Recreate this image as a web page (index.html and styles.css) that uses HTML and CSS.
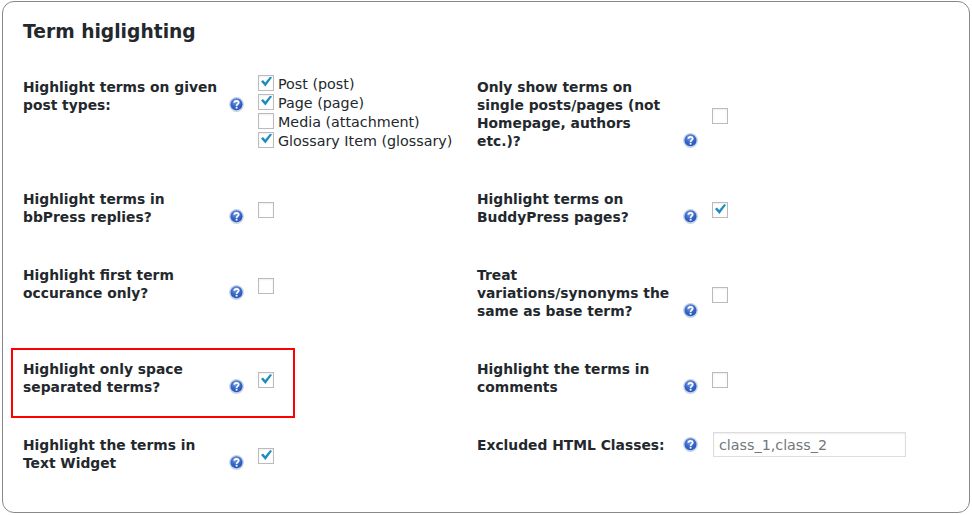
FILE: index.html
```html
<!DOCTYPE html>
<html lang="en">
<head>
<meta charset="utf-8">
<title>Term highlighting</title>
<link rel="stylesheet" href="styles.css">
</head>
<body>
<svg class="defs" width="0" height="0" aria-hidden="true">
  <defs>
    <radialGradient id="helpfill" cx="45%" cy="30%" r="75%">
      <stop offset="0" stop-color="#7fa4e6"/>
      <stop offset="0.55" stop-color="#3566c8"/>
      <stop offset="1" stop-color="#2450ae"/>
    </radialGradient>
    <symbol id="help" viewBox="0 0 15 15">
      <circle cx="7.5" cy="7.5" r="7.4" fill="#c6d2e6"/>
      <circle cx="7.5" cy="7.2" r="6" fill="url(#helpfill)"/>
      <path d="M5.3 5.8C5.4 4.4 6.4 3.8 7.5 3.8C8.8 3.8 9.7 4.6 9.7 5.7C9.7 7.2 7.6 7.2 7.6 8.9" fill="none" stroke="#fff" stroke-width="1.7"/>
      <rect x="6.7" y="9.8" width="1.8" height="1.8" fill="#fff"/>
    </symbol>
  </defs>
</svg>
<main class="card">
  <h2 class="title">Term higlighting</h2>
  <div class="grid">
    <div class="opt">
      <div class="label"><span class="text">Highlight terms on given post types:</span><svg class="help"><use href="#help"/></svg></div>
      <div class="list">
        <label class="item"><input class="box" type="checkbox" checked>Post (post)</label>
        <label class="item"><input class="box" type="checkbox" checked>Page (page)</label>
        <label class="item"><input class="box" type="checkbox">Media (attachment)</label>
        <label class="item"><input class="box" type="checkbox" checked>Glossary Item (glossary)</label>
      </div>
    </div>
    <div class="opt center">
      <div class="label"><span class="text">Only show terms on single posts/pages (not Homepage, authors etc.)?</span><svg class="help"><use href="#help"/></svg></div>
      <input class="box" type="checkbox">
    </div>
    <div class="opt center">
      <div class="label"><span class="text">Highlight terms in bbPress replies?</span><svg class="help"><use href="#help"/></svg></div>
      <input class="box" type="checkbox">
    </div>
    <div class="opt center">
      <div class="label"><span class="text">Highlight terms on BuddyPress pages?</span><svg class="help"><use href="#help"/></svg></div>
      <input class="box" type="checkbox" checked>
    </div>
    <div class="opt center">
      <div class="label"><span class="text">Highlight first term occurance only?</span><svg class="help"><use href="#help"/></svg></div>
      <input class="box" type="checkbox">
    </div>
    <div class="opt center">
      <div class="label"><span class="text">Treat variations/synonyms the same as base term?</span><svg class="help"><use href="#help"/></svg></div>
      <input class="box" type="checkbox">
    </div>
    <div class="opt center">
      <div class="label"><span class="text">Highlight only space separated terms?</span><svg class="help"><use href="#help"/></svg></div>
      <input class="box" type="checkbox" checked>
    </div>
    <div class="opt center">
      <div class="label"><span class="text">Highlight the terms in comments</span><svg class="help"><use href="#help"/></svg></div>
      <input class="box" type="checkbox">
    </div>
    <div class="opt center">
      <div class="label"><span class="text">Highlight the terms in Text Widget</span><svg class="help"><use href="#help"/></svg></div>
      <input class="box" type="checkbox" checked>
    </div>
    <div class="opt center">
      <div class="label"><span class="text">Excluded HTML Classes:</span><svg class="help"><use href="#help"/></svg></div>
      <input class="field" type="text" placeholder="class_1,class_2">
    </div>
  </div>
  <div class="marker"></div>
</main>
</body>
</html>
```
FILE: styles.css
```css
html, body {
  margin: 0;
  padding: 0;
  background: #fff;
}

body {
  font-family: "DejaVu Sans", Verdana, sans-serif;
  color: #23282d;
  overflow: hidden;
}

.defs {
  position: absolute;
}

.card {
  position: relative;
  box-sizing: border-box;
  width: 968px;
  height: 512px;
  margin: 1px 0 0 2px;
  padding: 18px 20px 0;
  border: 1px solid #888;
  border-radius: 12px;
  background: #fff;
}

.title {
  margin: 0;
  height: 24px;
  font-size: 18.7px;
  line-height: 24px;
  font-weight: 700;
}

.grid {
  display: grid;
  grid-template-columns: 454px 1fr;
  row-gap: 40px;
  align-items: start;
  margin-top: 34px;
}

.opt {
  display: flex;
  align-items: flex-start;
}

.opt.center {
  align-items: center;
}

.label {
  display: flex;
  width: 235px;
  flex: none;
  align-items: flex-end;
}

.text {
  width: 200px;
  margin-right: 6px;
  flex: none;
  font-size: 13.85px;
  line-height: 18px;
  font-weight: 700;
}

.help {
  width: 15px;
  height: 15px;
  flex: none;
  margin-bottom: 2px;
}

.list {
  display: flex;
  flex-direction: column;
  margin: -3px 0 -1px;
}

.item {
  display: flex;
  align-items: center;
  height: 19px;
  font-size: 14.3px;
  line-height: 19px;
}

.item .box {
  margin: 0 4px 4px 0;
}

.box {
  appearance: none;
  display: block;
  flex: none;
  box-sizing: border-box;
  width: 16px;
  height: 16px;
  margin: 4px 0 0;
  border: 1px solid #bbb;
  background: #fff;
  box-shadow: inset 0 1px 2px rgba(0, 0, 0, 0.07);
}

.box:checked::before {
  content: "";
  display: block;
  width: 11px;
  height: 10px;
  margin: 1px 0 0 2px;
  background: #1e8cbe;
  clip-path: polygon(0 50%, 18% 36%, 38% 60%, 84% 0, 100% 10%, 40% 100%);
}

.field {
  box-sizing: border-box;
  width: 193px;
  height: 25px;
  margin: -4px 0 -3px 1px;
  padding: 0 5px;
  border: 1px solid #ddd;
  font-family: inherit;
  font-size: 14.3px;
  box-shadow: inset 0 1px 2px rgba(0, 0, 0, 0.07);
}

.field::placeholder {
  color: #72777c;
  opacity: 1;
}

.marker {
  position: absolute;
  left: 8px;
  top: 346px;
  box-sizing: border-box;
  width: 284px;
  height: 70px;
  border: 2px solid #f00;
}
```
